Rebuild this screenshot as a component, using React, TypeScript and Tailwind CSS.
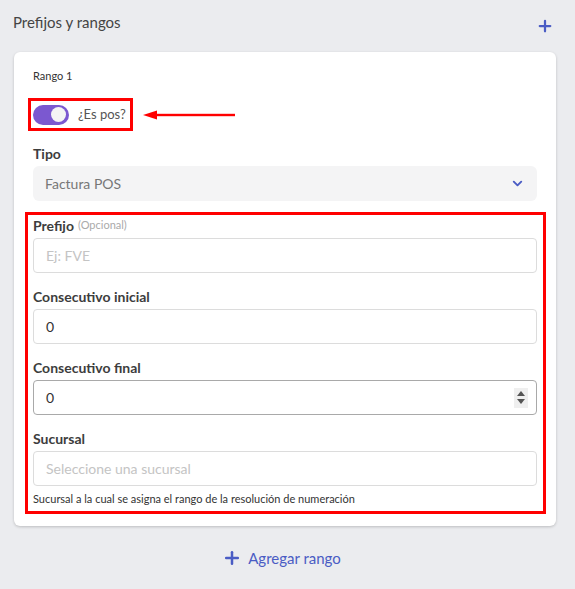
import { ChevronDown, Plus } from "lucide-react";

const font = { fontFamily: "Lato, 'Noto Sans', sans-serif" };

function Field({
  label,
  hint,
  children,
}: {
  label: string;
  hint?: string;
  children: React.ReactNode;
}) {
  return (
    <div className="flex flex-col">
      <div className="h-[20px] mb-[3px] flex items-center text-[14px] font-bold text-[#3d3d3d]">
        {label}
        {hint && <span className="ml-1 text-[11px] font-normal text-[#aaa]">{hint}</span>}
      </div>
      {children}
    </div>
  );
}

export default function App() {
  return (
    <div className="w-[575px] h-[589px] bg-[#ebecef] text-[#444]" style={font}>
      <div className="flex items-start justify-between pl-[13px] pr-[21px] pt-[12px] h-[52px]">
        <h2 className="text-[15px] leading-[20px] text-[#444]">Prefijos y rangos</h2>
        <Plus size={18} strokeWidth={3} className="text-[#4a5cc4] mt-[5px]" />
      </div>

      <div className="mx-[14px] w-[542px] bg-white rounded-md shadow-[0_1px_3px_rgba(0,0,0,0.2)] px-[19px] pt-[16px] pb-[12px]">
        <div className="text-[11px] leading-[16px] text-[#333]">Rango 1</div>

        <div className="flex items-center mt-[14px]">
          <div className="flex items-center gap-[9px] border-[3px] border-[#f00] pl-[2px] pr-[4px] h-[33px] -ml-[5px]">
            <div className="w-[36px] h-[20px] rounded-full bg-[#7b58d0] flex items-center justify-end pr-[3px]">
              <div className="w-[15px] h-[15px] rounded-full bg-[#f4f4f4]" />
            </div>
            <span className="text-[13px] text-[#555]">¿Es pos?</span>
          </div>
          <svg width="92" height="10" className="ml-[10px]" viewBox="0 0 92 10">
            <polygon points="0,5 14,0.5 14,9.5" fill="#f00" />
            <rect x="12" y="3.8" width="80" height="2.4" fill="#f00" />
          </svg>
        </div>

        <div className="mt-[12px]">
          <Field label="Tipo">
            <div className="h-[35px] rounded-md bg-[#f4f4f5] flex items-center justify-between pl-[12px] pr-[12px]">
              <span className="text-[14px] text-[#777]">Factura POS</span>
              <ChevronDown size={15} strokeWidth={3} className="text-[#4a5cc4]" />
            </div>
          </Field>
        </div>

        <div className="mt-[11px] -ml-[8px] -mr-[9px] border-[3px] border-[#f00] pl-[5px] pr-[6px] pb-[5px] flex flex-col gap-[13px]">
          <Field label="Prefijo" hint="(Opcional)">
            <div className="h-[35px] rounded border border-[#dcdcdc] flex items-center pl-[12px] text-[14px] text-[#c4c4c4]">
              Ej: FVE
            </div>
          </Field>
          <Field label="Consecutivo inicial">
            <div className="h-[35px] rounded border border-[#dcdcdc] flex items-center pl-[12px] text-[14px] text-[#333]">
              0
            </div>
          </Field>
          <Field label="Consecutivo final">
            <div className="h-[35px] rounded border border-[#a9a9a9] flex items-center justify-between pl-[12px] pr-[8px] text-[14px] text-[#333]">
              0
              <div className="w-[14px] h-[20px] bg-[#efefef] flex flex-col items-center justify-center gap-[3px]">
                <svg width="8" height="5" viewBox="0 0 8 5"><polygon points="4,0 8,5 0,5" fill="#555" /></svg>
                <svg width="8" height="5" viewBox="0 0 8 5"><polygon points="0,0 8,0 4,5" fill="#555" /></svg>
              </div>
            </div>
          </Field>
          <div className="flex flex-col">
            <Field label="Sucursal">
              <div className="h-[35px] rounded border border-[#dcdcdc] flex items-center pl-[12px] text-[14px] text-[#c4c4c4]">
                Seleccione una sucursal
              </div>
            </Field>
            <div className="text-[11px] leading-[14px] text-[#333] mt-[6px]">
              Sucursal a la cual se asigna el rango de la resolución de numeración
            </div>
          </div>
        </div>
      </div>

      <div className="flex items-center justify-center gap-[6px] mt-[22px] pr-[12px] text-[#4a5cc4]">
        <Plus size={20} strokeWidth={3} />
        <span className="text-[15px] leading-[20px]">Agregar rango</span>
      </div>
    </div>
  );
}
